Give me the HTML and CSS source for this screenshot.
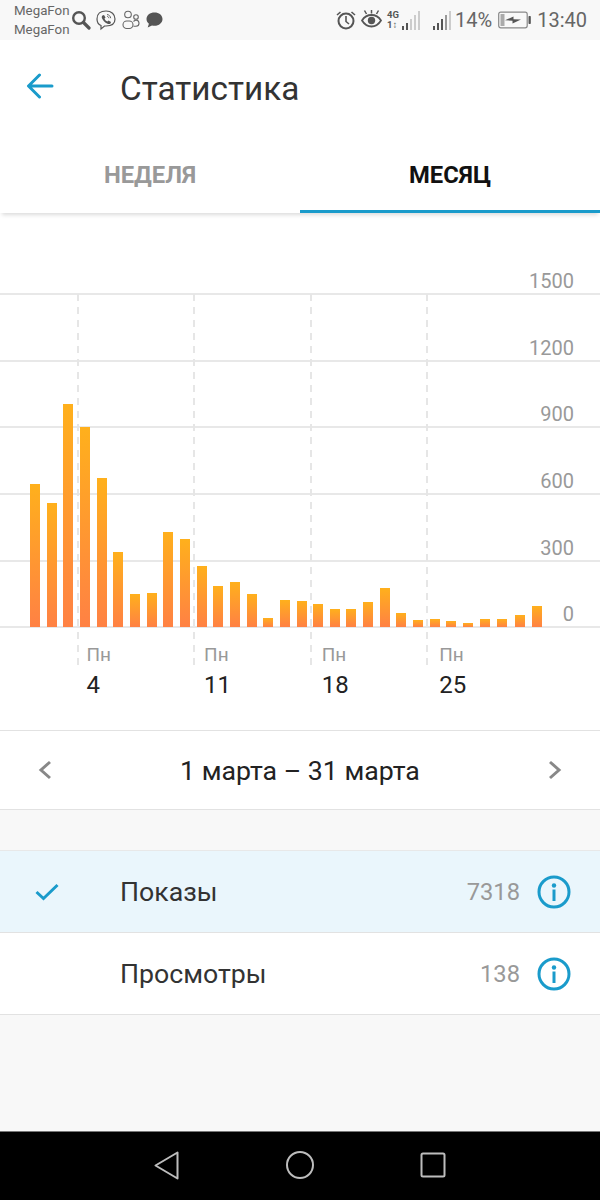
FILE: index.html
```html
<!DOCTYPE html>
<html lang="ru">
<head>
<meta charset="utf-8">
<title>Статистика</title>
<link rel="stylesheet" href="styles.css">
</head>
<body>
<div class="screen">
  <div class="status">
    <div class="carrier"><span>MegaFon</span><span>MegaFon</span></div>
    <div class="status-left">
      <svg width="20" height="20" viewBox="0 0 20 20" fill="none" stroke="#555"><circle cx="8" cy="8" r="5.8" stroke-width="2.4"/><path d="M12.5 12.5L18 18" stroke-width="3.2" stroke-linecap="round"/></svg>
      <svg width="20" height="21" viewBox="0 0 20 21" fill="none" stroke="#555" stroke-width="1.2"><path d="M10 1C4.5 1 1 3.500 1 9c0 3.500 1.500 5.500 4 6.500V19l3.500-3H10c5.500 0 9-2.500 9-7s-3.500-8-9-8z"/><path d="M6.500 5.500l1.500-.500 1.500 2.500-1 1c.5 1.500 1.500 2.500 3 3l1-1 2.500 1.500-.5 1.500c-1 .8-2 .8-3.500 0-2.500-1.300-4-3-5-5.200-.5-1.200-.2-2.100.500-2.800z" fill="#555" stroke="none"/><path d="M11 4.500c2 .2 3.500 1.700 3.700 3.700M11 6.300c1 .1 1.800 1 1.900 1.900" stroke-width=".9"/></svg>
      <svg class="people" width="18" height="20" viewBox="0 0 18 20" fill="none" stroke="#666" stroke-width="1.100"><circle cx="6" cy="4.500" r="3.300"/><circle cx="14" cy="7" r="2.300"/><rect x="1" y="11" width="10" height="7.500" rx="3.700"/><path d="M11.500 11.500c1-1 2-1.300 3-1.200 1.600.2 2.500 1.500 2.500 3 0 1.700-1.200 3-3 3h-2.500"/></svg>
      <svg width="17" height="16" viewBox="0 0 17 16"><path d="M8.500 0.500C4 .5.500 3.200.500 7c0 2 1 3.700 2.400 4.800L1.700 15.500l4.300-2c.8.200 1.600.3 2.500.3 4.500 0 8-3 8-6.800S13 .5 8.500.5z" fill="#555"/></svg>
    </div>
    <div class="status-right">
      <svg class="alarm" width="20" height="20" viewBox="0 0 20 20" fill="none" stroke="#555"><circle cx="10" cy="11" r="7.500" stroke-width="2"/><path d="M10 6v5.500l3 2.500" stroke-width="1.600"/><path d="M1 5l3.500-3M19 5l-3.500-3" stroke-width="1.600"/></svg>
      <svg class="eye" width="21" height="20" viewBox="0 0 21 20" fill="none" stroke="#555"><path d="M1 11.500c2.500-4 5.700-5.500 9.500-5.500s7 1.500 9.500 5.500c-2.500 4-5.700 6-9.500 6s-7-2-9.500-6z" stroke-width="1.800"/><circle cx="10.500" cy="11.500" r="3.700" fill="#555" stroke="none"/><path d="M3.500 1.500l2 3.500M10.500 1v3.500M17.500 1.500l-2 3.500" stroke-width="1.500"/></svg>
      <div class="net">
        <div class="net-text"><span>4G</span><span>1↕</span></div>
        <div class="signal s-net"><i class="on h1"></i><i class="on h2"></i><i class="h3"></i><i class="h4"></i><i class="h5"></i></div>
      </div>
      <div class="signal s-two"><i class="on h1"></i><i class="on h2"></i><i class="on h3"></i><i class="mid h4"></i><i class="h5"></i></div>
      <span class="pct">14%</span>
      <svg class="battery" width="33" height="18" viewBox="0 0 33 18" fill="none"><rect x=".7" y="1.200" width="28.500" height="15.600" rx="2" stroke="#888" stroke-width="1.200"/><rect x="2.500" y="3" width="4" height="12" fill="#aaa"/><path d="M7 9.300L15.500 5.500v2.800l7.500.2-8.500 4v-2.800z" fill="#555"/><rect x="30.500" y="5" width="2.300" height="8" rx=".7" fill="#555"/></svg>
      <span class="clock">13:40</span>
    </div>
  </div>

  <header class="appbar">
    <svg class="back" width="28" height="26" viewBox="0 0 28 26" fill="none" stroke="#1a9bcb" stroke-width="3" stroke-linecap="round" stroke-linejoin="round"><path d="M26 13H3M13.500 2L2.500 13l11 11"/></svg>
    <h1>Статистика</h1>
  </header>

  <nav class="tabs">
    <div class="tab">НЕДЕЛЯ</div>
    <div class="tab active">МЕСЯЦ</div>
  </nav>

  <section class="chart">
    <div class="grid">
      <div class="line"><span>1500</span></div>
      <div class="line"><span>1200</span></div>
      <div class="line"><span>900</span></div>
      <div class="line"><span>600</span></div>
      <div class="line"><span>300</span></div>
      <div class="line last"><span>0</span></div>
    </div>
    <div class="dashes"><i></i><i></i><i></i><i></i></div>
    <div class="bars">
      <i style="height:143px"></i><i style="height:124px"></i><i style="height:223px"></i><i style="height:200px"></i><i style="height:149px"></i><i style="height:75px"></i><i style="height:33px"></i><i style="height:34px"></i><i style="height:95px"></i><i style="height:88px"></i><i style="height:61px"></i><i style="height:41px"></i><i style="height:45px"></i><i style="height:33px"></i><i style="height:9px"></i><i style="height:27px"></i><i style="height:26px"></i><i style="height:23px"></i><i style="height:18px"></i><i style="height:18px"></i><i style="height:25px"></i><i style="height:39px"></i><i style="height:14px"></i><i style="height:7px"></i><i style="height:8px"></i><i style="height:6px"></i><i style="height:4px"></i><i style="height:8px"></i><i class="shift1" style="height:8px"></i><i class="shift2" style="height:12px"></i><i class="shift2" style="height:21px"></i>
    </div>
    <div class="weeks">
      <div class="week"><span>Пн</span><b>4</b></div>
      <div class="week"><span>Пн</span><b>11</b></div>
      <div class="week"><span>Пн</span><b>18</b></div>
      <div class="week"><span>Пн</span><b>25</b></div>
    </div>
  </section>

  <div class="period">
    <svg width="14" height="20" viewBox="0 0 14 20" fill="none" stroke="#888" stroke-width="3"><path d="M12 2L3 10l9 8"/></svg>
    <span>1 марта – 31 марта</span>
    <svg width="14" height="20" viewBox="0 0 14 20" fill="none" stroke="#888" stroke-width="3"><path d="M2 2l9 8-9 8"/></svg>
  </div>

  <div class="gap"></div>

  <div class="row selected">
    <div class="check"><svg width="24" height="18" viewBox="0 0 24 18" fill="none" stroke="#1a9bcb" stroke-width="3"><path d="M1.500 9l7 6.500L22.500 2"/></svg></div>
    <div class="name">Показы</div>
    <div class="value">7318</div>
    <svg class="info" width="34" height="34" viewBox="0 0 34 34"><circle cx="17" cy="17" r="15" fill="none" stroke="#1a9bcb" stroke-width="3"/><circle cx="17" cy="10.500" r="2.200" fill="#1a9bcb"/><rect x="15.500" y="14.500" width="3" height="11.500" fill="#1a9bcb"/></svg>
  </div>
  <div class="row">
    <div class="check"></div>
    <div class="name">Просмотры</div>
    <div class="value">138</div>
    <svg class="info" width="34" height="34" viewBox="0 0 34 34"><circle cx="17" cy="17" r="15" fill="none" stroke="#1a9bcb" stroke-width="3"/><circle cx="17" cy="10.500" r="2.200" fill="#1a9bcb"/><rect x="15.500" y="14.500" width="3" height="11.500" fill="#1a9bcb"/></svg>
  </div>

  <div class="fill"></div>

  <div class="navbar">
    <svg width="25" height="29" viewBox="0 0 25 29" fill="none" stroke="#bdbdbd" stroke-width="2" stroke-linejoin="round"><path d="M23.500 1.500v26L1.500 14.500z"/></svg>
    <svg width="28" height="28" viewBox="0 0 28 28" fill="none" stroke="#bdbdbd" stroke-width="2"><circle cx="14" cy="14" r="13"/></svg>
    <svg width="26" height="26" viewBox="0 0 26 26" fill="none" stroke="#bdbdbd" stroke-width="2" stroke-linejoin="round"><rect x="1.500" y="1.500" width="23" height="23" rx="1.500"/></svg>
  </div>
</div>
</body>
</html>
```

FILE: styles.css
```css
* { box-sizing: border-box; }
html, body { margin: 0; padding: 0; }
body { width: 600px; height: 1200px; overflow: hidden; font-family: Roboto, "Noto Sans", sans-serif; background: #fff; }
.screen { width: 600px; height: 1200px; display: flex; flex-direction: column; }

.status { height: 40px; flex: none; background: #f8f8f8; display: flex; align-items: center; color: #666; padding-left: 14px; }
.carrier { display: flex; flex-direction: column; font-size: 13.3px; line-height: 19px; width: 57px; flex: none; color: #666; }
.status-left { display: flex; align-items: center; gap: 5px; }
.status-left .people { margin: 0 1px; }
.status-right { display: flex; align-items: center; margin-left: auto; padding-right: 13px; }
.alarm { margin-right: 5px; margin-top: -1px; }
.eye { margin-right: 5px; margin-top: -2px; }
.net { display: flex; align-items: flex-end; width: 46px; height: 20px; }
.net-text { display: flex; flex-direction: column; font-size: 9.5px; font-weight: 700; line-height: 10px; width: 13px; color: #555; }
.signal { display: flex; align-items: flex-end; gap: 2px; height: 19px; }
.signal i { width: 2px; background: #ccc; display: block; }
.signal i.on { background: #555; }
.signal i.mid { background: #999; }
.h1 { height: 4px; } .h2 { height: 7px; } .h3 { height: 11px; } .h4 { height: 15px; } .h5 { height: 19px; }
.s-net { margin-left: 2px; }
.pct { font-size: 20px; margin-left: 4px; }
.battery { margin-left: 6px; }
.clock { font-size: 20px; margin-left: 6px; }

.appbar { height: 95px; flex: none; display: flex; align-items: center; position: relative; padding-left: 26px; padding-top: 1px; }
.appbar h1 { margin: 0 0 0 66px; font-size: 33.3px; font-weight: 400; color: #333; }
.back { flex: none; margin-top: -4px; }

.tabs { height: 78px; flex: none; display: flex; position: relative; z-index: 1; background: #fff; box-shadow: 0 4px 4px -2px rgba(0,0,0,.14); }
.tab { flex: 1; display: flex; align-items: center; justify-content: center; font-size: 23.8px; font-weight: 700; color: #999; border-bottom: 3px solid transparent; padding-top: 5px; }
.tab.active { color: #111; border-bottom-color: #1a9bcb; }

.chart { height: 518px; flex: none; position: relative; border-bottom: 1px solid #e2e2e2; }
.grid { padding-top: 80px; display: flex; flex-direction: column; }
.line { height: 66.67px; border-top: 2px solid #e8e8e8; position: relative; }
.line.last { height: 2px; }
.line span { position: absolute; right: 26px; bottom: 100%; margin-bottom: 1px; font-size: 20px; line-height: 26px; color: #999; }
.line:not(.last) span { bottom: auto; top: -27px; }
.dashes { position: absolute; left: 76.5px; top: 81px; display: flex; gap: 114.67px; }
.dashes i { display: block; width: 2px; height: 372px; background: repeating-linear-gradient(to bottom, #e6e6e6 0 7px, transparent 7px 13px); }
.bars { position: absolute; left: 30px; top: 81px; height: 333px; width: 520px; display: flex; align-items: flex-end; gap: 6.67px; }
.bars i { display: block; width: 10px; flex: none; background: linear-gradient(to bottom, #ffb01c, #ff8144); background-size: 100% 100%; }
.bars i.shift1 { margin-left: .6px; }
.bars i.shift2 { margin-left: 1.100px; }
.weeks { position: absolute; left: 86.5px; top: 428px; display: flex; }
.week { width: 117.6px; display: flex; flex-direction: column; }
.week span { font-size: 19px; line-height: 28px; color: #999; }
.week b { font-size: 24px; font-weight: 400; line-height: 33px; color: #222; }

.period { height: 79px; flex: none; display: flex; align-items: center; justify-content: space-between; padding: 0 38px; font-size: 26.7px; color: #222; border-bottom: 1px solid #e2e2e2; }
.period span { padding-top: 2px; }

.gap { height: 41px; flex: none; background: #f8f8f8; border-bottom: 1px solid #e8e8e8; }

.row { height: 82px; flex: none; display: flex; align-items: center; border-bottom: 1px solid #e2e2e2; }
.row.selected { background: #eaf6fc; }
.check { width: 120px; flex: none; padding-left: 35px; display: flex; align-items: center; }
.name { font-size: 26.7px; color: #333; flex: 1; }
.value { font-size: 23.7px; color: #999; margin-right: 17px; }
.info { margin-right: 29px; flex: none; }

.fill { flex: 1; background: #f8f8f8; }
.navbar { height: 69px; flex: none; background: #000; border-top: 1px solid #777; position: relative; }
.navbar svg { position: absolute; top: 19px; }
.navbar svg:nth-child(1) { left: 154px; }
.navbar svg:nth-child(2) { left: 286px; top: 19px; }
.navbar svg:nth-child(3) { left: 420px; top: 20px; }
```
